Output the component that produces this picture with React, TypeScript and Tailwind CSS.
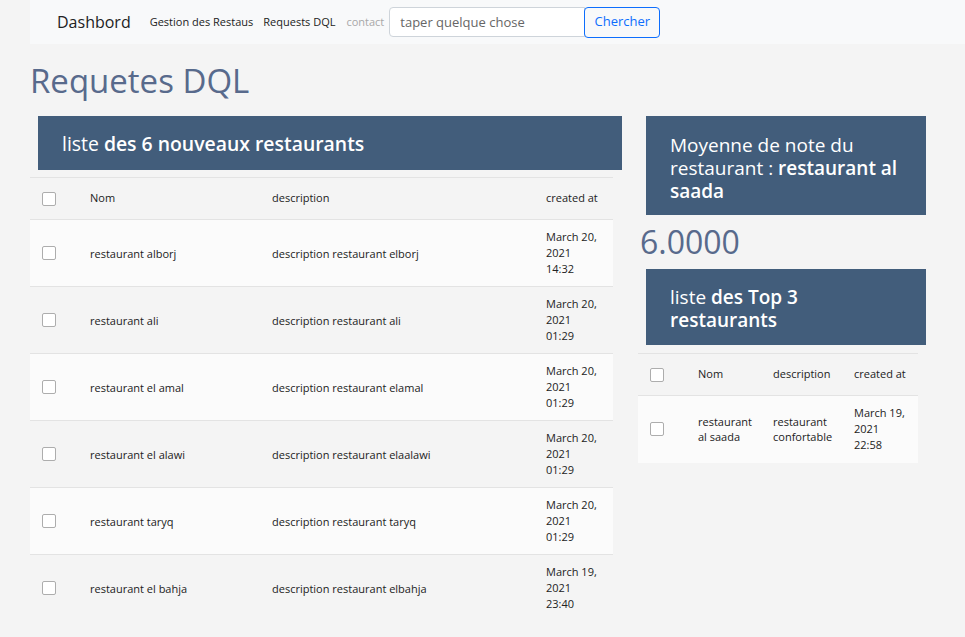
import React from "react";

const FONT = { fontFamily: "'Open Sans', 'Noto Sans', sans-serif" };

type Row = { nom: React.ReactNode; desc: React.ReactNode; date: [string, string, string] };

const NEW_ROWS: Row[] = [
  { nom: "restaurant alborj", desc: "description restaurant elborj", date: ["March 20,", "2021", "14:32"] },
  { nom: "restaurant ali", desc: "description restaurant ali", date: ["March 20,", "2021", "01:29"] },
  { nom: "restaurant el amal", desc: "description restaurant elamal", date: ["March 20,", "2021", "01:29"] },
  { nom: "restaurant el alawi", desc: "description restaurant elaalawi", date: ["March 20,", "2021", "01:29"] },
  { nom: "restaurant taryq", desc: "description restaurant taryq", date: ["March 20,", "2021", "01:29"] },
  { nom: "restaurant el bahja", desc: "description restaurant elbahja", date: ["March 19,", "2021", "23:40"] },
];

const TOP_ROWS: Row[] = [
  {
    nom: (<>restaurant<br />al saada</>),
    desc: (<>restaurant<br />confortable</>),
    date: ["March 19,", "2021", "22:58"],
  },
];

function Check() {
  return <span className="block w-[14px] h-[14px] bg-white border border-[#adadad] rounded-[2px]" />;
}

function Header({ children }: { children: React.ReactNode }) {
  return (
    <div className="bg-[#425d7b] text-white text-[19px] leading-[23px] px-6" style={FONT}>
      {children}
    </div>
  );
}

function DataTable({ rows, cols }: { rows: Row[]; cols: [number, number, number, number] }) {
  return (
    <table className="table-fixed border-collapse text-[11px] text-[#222]" style={{ ...FONT, width: cols.reduce((a, b) => a + b, 0) }}>
      <colgroup>
        {cols.map((w, i) => (
          <col key={i} style={{ width: w }} />
        ))}
      </colgroup>
      <thead>
        <tr className="h-[42px] border-t border-[#e3e3e3]">
          <th className="px-3 align-middle text-left font-medium"><Check /></th>
          <th className="px-3 align-middle text-left font-medium">Nom</th>
          <th className="px-3 align-middle text-left font-medium">description</th>
          <th className="px-3 align-middle text-left font-medium whitespace-nowrap">created at</th>
        </tr>
      </thead>
      <tbody>
        {rows.map((r, i) => (
          <tr key={i} className={`h-[67px] border-t border-[#e3e3e3] ${i % 2 === 0 ? "bg-[#fbfbfb]" : ""}`}>
            <td className="px-3 align-middle"><Check /></td>
            <td className="px-3 align-middle leading-[15px]">{r.nom}</td>
            <td className="px-3 align-middle leading-[15px]">{r.desc}</td>
            <td className="px-3 align-middle leading-[16px] whitespace-nowrap">
              {r.date[0]}
              <br />
              {r.date[1]}
              <br />
              {r.date[2]}
            </td>
          </tr>
        ))}
      </tbody>
    </table>
  );
}

export default function App() {
  return (
    <div className="min-h-[637px] bg-[#f4f4f4] pl-[30px]" style={FONT}>
      {/* navbar */}
      <nav className="h-[44px] bg-[#f8f9fa] flex items-center pl-[27px]">
        <span className="text-[16px] text-[#222] mr-[19px]">Dashbord</span>
        <a className="text-[11px] text-[#222] mr-[10px]">Gestion des Restaus</a>
        <a className="text-[11px] text-[#222] mr-[11px]">Requests DQL</a>
        <a className="text-[11px] text-[#a8a8a8] mr-[5px]">contact</a>
        <input
          className="w-[196px] h-[30px] bg-white border border-[#ced4da] rounded-l-[4px] px-[10px] text-[13px] text-[#555] placeholder:text-[#666] outline-none"
          placeholder="taper quelque chose"
        />
        <button className="h-[31px] w-[76px] border border-[#0d6efd] rounded-[4px] -ml-px text-[13px] text-[#0d6efd] bg-[#f8f9fa]">
          Chercher
        </button>
      </nav>

      <h1 className="text-[33px] text-[#586a8c] pt-[14px] h-[72px] leading-[46px]">Requetes DQL</h1>

      <div className="flex">
        {/* left column */}
        <div className="w-[608px]">
          <div className="ml-[8px] w-[584px]">
            <Header>
              <div className="h-[54px] flex items-center text-[19.4px]">
                <span>liste <b className="font-semibold">des 6 nouveaux restaurants</b></span>
              </div>
            </Header>
          </div>
          <div className="mt-[7px]">
            <DataTable rows={NEW_ROWS} cols={[48, 182, 274, 79]} />
          </div>
        </div>

        {/* right column */}
        <div className="w-[288px]">
          <div className="ml-[8px] w-[280px]">
            <Header>
              <div className="pt-[18px] pb-[12px]">
                Moyenne de note du restaurant : <b className="font-semibold">restaurant al saada</b>
              </div>
            </Header>
          </div>
          <div className="text-[32px] leading-[54px] text-[#586a8c] pl-[2px]">6.0000</div>
          <div className="ml-[8px] w-[280px]">
            <Header>
              <div className="pt-[17px] pb-[13px]">
                liste <b className="font-semibold">des Top 3 restaurants</b>
              </div>
            </Header>
          </div>
          <div className="mt-[8px]">
            <DataTable rows={TOP_ROWS} cols={[48, 75, 81, 76]} />
          </div>
        </div>
      </div>
    </div>
  );
}
